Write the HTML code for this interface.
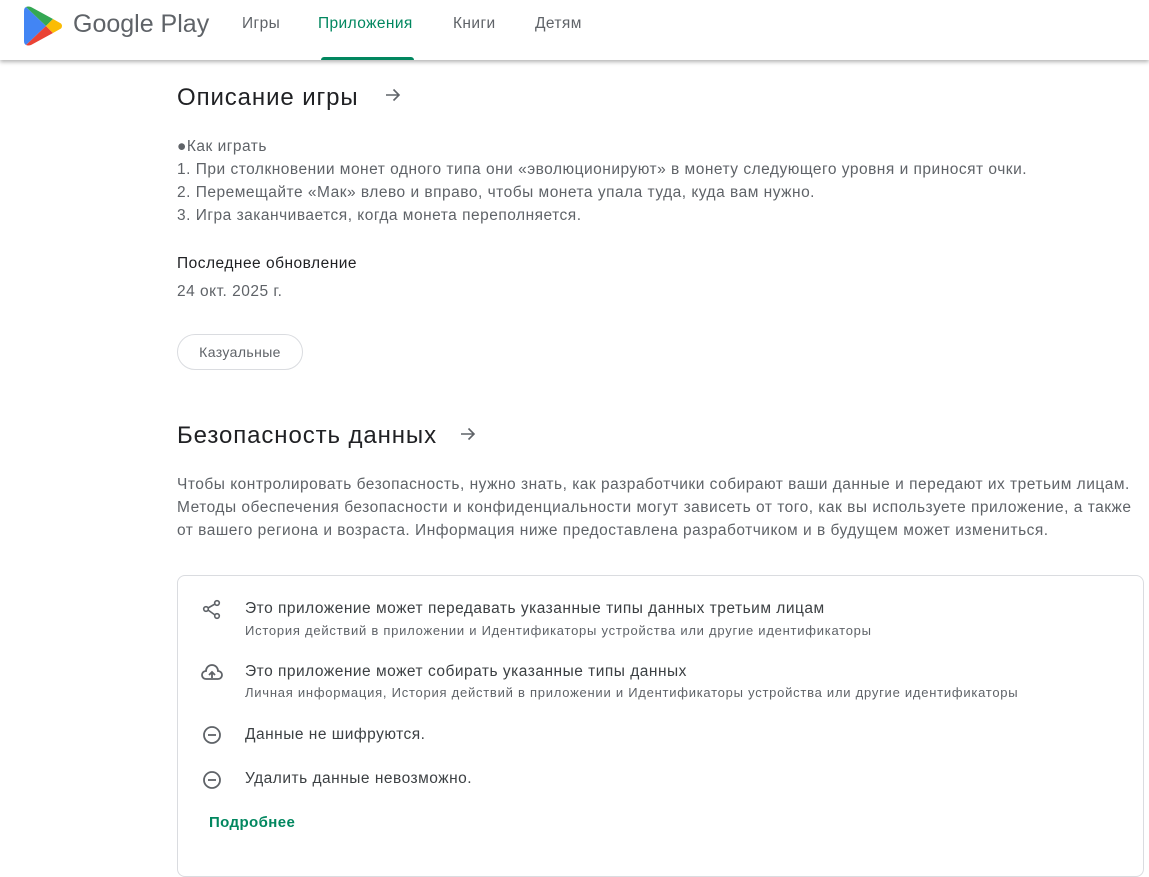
<!DOCTYPE html>
<html><head><meta charset="utf-8"><style>
body{margin:0;width:1149px;height:847px;overflow:hidden;background:#fff;font-family:"Liberation Sans",sans-serif;color:#202124;position:relative}
.hdr{position:absolute;left:0;top:0;width:1149px;height:60px;background:#fff;box-shadow:0 2px 4px rgba(0,0,0,.3);z-index:2}
.nav{position:absolute;top:15px;font-size:15.5px;color:#5f6368;letter-spacing:.4px}
.a{position:absolute;white-space:nowrap}
h2{position:absolute;margin:0;font-size:24px;font-weight:normal;color:#202124;letter-spacing:.9px;white-space:nowrap}
.p{font-size:15.5px;color:#5f6368;line-height:23px;letter-spacing:.5px}
.t{font-size:15.5px;color:#3c4043;letter-spacing:.5px}
.s{font-size:13px;color:#5f6368;letter-spacing:.75px}
</style></head><body>
<div class="hdr">
<svg class="a" style="left:24px;top:5px" width="40" height="42" viewBox="0 0 40 42">
<path d="M2 2 L22 21 L2 40 Q0 39 0 36 V6 Q0 3 2 2Z" fill="#4285f4"/>
<path d="M2 2 Q4 1 7 2 L29 14 L22 21Z" fill="#34a853"/>
<path d="M2 40 Q4 41 7 40 L29 28 L22 21Z" fill="#ea4335"/>
<path d="M29 14 L37 18.5 Q39 21 37 23.5 L29 28 L22 21Z" fill="#fbbc04"/>
</svg>
<div class="a" style="left:73px;top:10px;font-size:25px;color:#5f6368">Google Play</div>
<div class="nav" style="left:242px">Игры</div>
<div class="nav" style="left:318px;color:#01875f">Приложения</div>
<div class="a" style="left:321px;top:57px;width:93px;height:3px;background:#01875f;border-radius:3px 3px 0 0"></div>
<div class="nav" style="left:453px">Книги</div>
<div class="nav" style="left:535px">Детям</div>
</div>
<h2 style="left:177px;top:84px">Описание игры</h2>
<svg class="a" style="left:384px;top:86px" width="18" height="18" viewBox="0 0 18 18" fill="none" stroke="#5f6368" stroke-width="1.6"><path d="M2 9 H15 M9.5 3.5 L15 9 L9.5 14.5"/></svg>
<div class="a p" style="left:177px;top:135px">●Как играть<br>1. При столкновении монет одного типа они «эволюционируют» в монету следующего уровня и приносят очки.<br>2. Перемещайте «Мак» влево и вправо, чтобы монета упала туда, куда вам нужно.<br>3. Игра заканчивается, когда монета переполняется.</div>
<div class="a" style="left:177px;top:255px;font-size:15.5px;color:#202124;letter-spacing:.5px">Последнее обновление</div>
<div class="a p" style="left:177px;top:280px">24 окт. 2025 г.</div>
<div class="a" style="left:177px;top:334px;width:124px;height:34px;border:1px solid #dadce0;border-radius:18px;font-size:14px;color:#5f6368;text-align:center;line-height:34px;letter-spacing:.4px">Казуальные</div>
<h2 style="left:177px;top:422px">Безопасность данных</h2>
<svg class="a" style="left:459px;top:425px" width="18" height="18" viewBox="0 0 18 18" fill="none" stroke="#5f6368" stroke-width="1.6"><path d="M2 9 H15 M9.5 3.5 L15 9 L9.5 14.5"/></svg>
<div class="a p" style="left:177px;top:473px">Чтобы контролировать безопасность, нужно знать, как разработчики собирают ваши данные и передают их третьим лицам.<br>Методы обеспечения безопасности и конфиденциальности могут зависеть от того, как вы используете приложение, а также<br>от вашего региона и возраста. Информация ниже предоставлена разработчиком и в будущем может измениться.</div>
<div class="a" style="left:177px;top:575px;width:965px;height:300px;border:1px solid #dadce0;border-radius:8px"></div>
<svg class="a" style="left:202px;top:599px" width="20" height="22" viewBox="0 0 20 22" fill="none" stroke="#5f6368" stroke-width="1.6"><circle cx="15" cy="4" r="2.3"/><circle cx="4" cy="10" r="2.3"/><circle cx="15" cy="17" r="2.3"/><path d="M6 9 L13 5 M6 11 L13 16"/></svg>
<div class="a t" style="left:245px;top:600px">Это приложение может передавать указанные типы данных третьим лицам</div>
<div class="a s" style="left:245px;top:623px">История действий в приложении и Идентификаторы устройства или другие идентификаторы</div>
<svg class="a" style="left:200px;top:663px" width="24" height="20" viewBox="0 0 24 20" fill="none" stroke="#5f6368" stroke-width="1.8"><path d="M6 16 H18 A4 4 0 0 0 18 8 A6 6 0 0 0 6 8 A4 4 0 0 0 6 16Z"/><path d="M12 15 V9 M9 12 L12 9 L15 12"/></svg>
<div class="a t" style="left:245px;top:663px">Это приложение может собирать указанные типы данных</div>
<div class="a s" style="left:245px;top:685px">Личная информация, История действий в приложении и Идентификаторы устройства или другие идентификаторы</div>
<svg class="a" style="left:202px;top:725px" width="20" height="20" viewBox="0 0 20 20" fill="none" stroke="#5f6368" stroke-width="1.8"><circle cx="10" cy="10" r="8"/><path d="M6 10 H14"/></svg>
<div class="a t" style="left:245px;top:726px">Данные не шифруются.</div>
<svg class="a" style="left:202px;top:770px" width="20" height="20" viewBox="0 0 20 20" fill="none" stroke="#5f6368" stroke-width="1.8"><circle cx="10" cy="10" r="8"/><path d="M6 10 H14"/></svg>
<div class="a t" style="left:245px;top:770px">Удалить данные невозможно.</div>
<div class="a" style="left:209px;top:814px;font-size:15px;font-weight:bold;color:#01875f;letter-spacing:.4px">Подробнее</div>
</body></html>
